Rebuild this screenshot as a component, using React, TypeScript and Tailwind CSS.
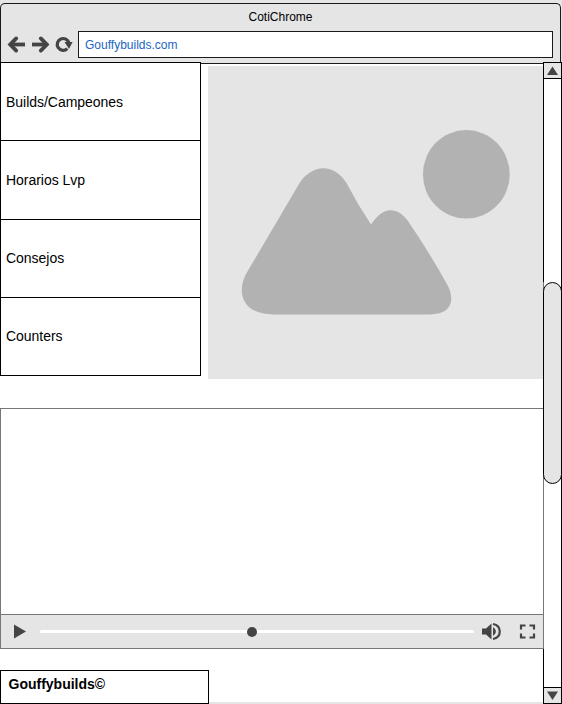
import React from "react";

const menu = [
  { label: "Builds/Campeones", size: "h-[78px] pt-[2px]" },
  { label: "Horarios Lvp", size: "h-[79px]" },
  { label: "Consejos", size: "h-[78px]" },
  { label: "Counters", size: "h-[78px]" },
];

function NavIcons() {
  return (
    <svg width="70" height="20" viewBox="6 34.500 70 20" className="shrink-0" fill="none" stroke="#444" strokeWidth="3.8">
      <path d="M10 44H25" />
      <path d="M16.200 37.900L10.200 44L16.200 50.100" strokeLinecap="round" />
      <path d="M32 44H47" />
      <path d="M40.800 37.900L46.800 44L40.800 50.100" strokeLinecap="round" />
      <path d="M67.300 48.100A5.900 5.900 0 1 1 68.900 42.700" strokeWidth="3.2" />
      <path d="M64.500 41.500H72.600L69 48.500Z" fill="#444" stroke="none" />
    </svg>
  );
}

function Header() {
  return (
    <header className="h-[62px] bg-[#e5e5e5] pt-[3px]">
      <div className="h-[59px] w-[561px] rounded-t-[5px] border border-b-0 border-[#1a1a1a]">
        <div className="flex h-[27px] items-center justify-center pb-[2px] text-[12px] text-black">CotiChrome</div>
        <div className="flex h-[27px] items-center">
          <div className="flex w-[77px] pl-[5px]"><NavIcons /></div>
          <div className="flex h-[27px] w-[475px] items-center border border-[#1a1a1a] bg-white pl-[6px] text-[12px] text-[#2166c4]">
            Gouffybuilds.com
          </div>
        </div>
      </div>
    </header>
  );
}

function Scrollbar() {
  return (
    <aside className="flex h-[642px] w-[19px] shrink-0 flex-col border-y border-r border-black bg-white">
      <div className="flex h-[16px] items-center justify-center border-b border-l border-black bg-[#e5e5e5]">
        <svg width="17" height="15" viewBox="0 0 17 15"><path d="M3 12L8.5 3.5L14 12Z" fill="#444" /></svg>
      </div>
      <div className="h-[203px] border-l border-black" />
      <div className="-mr-px h-[202px] bg-[linear-gradient(to_right,#777_1px,transparent_1px,transparent_18px,#000_18px)]">
        <div className="h-full rounded-full border border-black bg-[#e5e5e5]" />
      </div>
      <div className="h-[165px] border-l border-[#777]" />
      <div className="grow border-l border-black" />
      <div className="flex h-[16px] items-center justify-center border-t border-l border-black bg-[#e5e5e5]">
        <svg width="17" height="15" viewBox="0 0 17 15"><path d="M3 3.5H14L8.5 12Z" fill="#444" /></svg>
      </div>
    </aside>
  );
}

function Picture() {
  return (
    <svg width="335" height="313" viewBox="208 66 335 313" className="mt-[2px] ml-[7px] bg-[#e5e5e5]" fill="#b2b2b2">
      <ellipse cx="466.3" cy="174.3" rx="43.4" ry="44.2" />
      <path d="M299 184C312 163 335 163 347 184Q358 205 371 224.500C383 206 397 206 408 221Q431 255 448 286C456 303 449 314.500 430 314.500H273C246 314.500 235 296 246 274Z" />
    </svg>
  );
}

function Player() {
  return (
    <section className="mt-[29px] h-[241px] w-[543px] border-y border-l border-[#777] bg-white">
      <div className="h-[205px]" />
      <div className="flex h-[34px] items-center border-t border-[#777] bg-[#e5e5e5]">
        <svg width="39" height="33" viewBox="1 615 39 33" fill="#444"><path d="M14 624.500L26 631.500L14 638.500Z" /></svg>
        <div className="flex h-[3px] w-[434px] items-center justify-center rounded-full bg-white">
          <div className="mr-[11px] h-[10px] w-[10px] shrink-0 rounded-full bg-[#444]" />
        </div>
        <svg width="69" height="33" viewBox="474 615 69 33" fill="#444">
          <path d="M482 628.500H486L491.500 623.500V639.500L486 634.500H482Z" />
          <path d="M493 627.300C496.800 629.300 496.800 633.700 493 635.700Z" />
          <path d="M493 624C502 625.700 502 637.300 493 639" fill="none" stroke="#444" strokeWidth="2.2" />
          <path d="M521 629.500V625.500H525.500M529.500 625.500H534V629.500M534 633.500V637.500H529.500M525.500 637.500H521V633.500" fill="none" stroke="#444" strokeWidth="2.2" />
        </svg>
      </div>
    </section>
  );
}

export default function App() {
  return (
    <div className="h-[704px] w-[562px] overflow-hidden bg-white font-['Liberation_Sans',Arial,sans-serif]">
      <Header />
      <div className="flex h-[642px]">
        <main className="flex w-[543px] flex-col">
          <div className="flex h-[317px]">
            <nav className="h-[314px] w-[201px] shrink-0 border-t border-r border-l border-black bg-white">
              {menu.map((item) => (
                <div key={item.label} className={`flex items-center border-b border-black pl-[5px] text-[14px] tracking-[-0.03px] text-black ${item.size}`}>
                  {item.label}
                </div>
              ))}
            </nav>
            <div className="w-[342px]">
              <div className="h-[2px] border-b border-[#1a1a1a] bg-[#e5e5e5]" />
              <Picture />
            </div>
          </div>
          <Player />
          <footer className="mt-[21px] flex h-[34px] items-end">
            <div className="h-[34px] w-[209px] border border-black bg-white pt-[5px] pl-[7.5px] text-[14px] leading-[17px] font-bold text-black">Gouffybuilds©</div>
            <div className="h-[2px] grow bg-[#e5e5e5]" />
          </footer>
        </main>
        <Scrollbar />
      </div>
    </div>
  );
}
